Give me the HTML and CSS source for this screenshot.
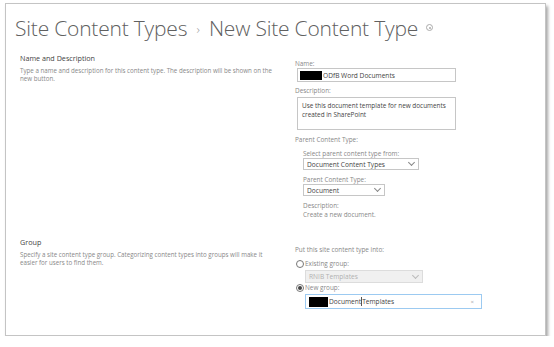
FILE: index.html
```html
<!DOCTYPE html>
<html lang="en">
<head>
    <meta charset="UTF-8">
    <title>New Site Content Type</title>
    <link rel="stylesheet" href="styles.css">
</head>
<body>
    <div class="window">
        <h1 class="title">
            Site Content Types <span class="crumb">&rsaquo;</span> New Site Content Type
            <span class="info"></span>
        </h1>

        <div class="section first">
            <div class="intro">
                <h2>Name and Description</h2>
                <p>Type a name and description for this content type. The description will be shown on the new button.</p>
            </div>
            <div class="fields">
                <div class="label">Name:</div>
                <div class="input name"><span class="redact"></span>ODfB Word Documents</div>
                <div class="label">Description:</div>
                <div class="input area">Use this document template for new documents created in SharePoint</div>
                <div class="label">Parent Content Type:</div>
                <div class="sub">
                    <div class="label">Select parent content type from:</div>
                    <div class="select wide">Document Content Types<span class="chev"></span></div>
                    <div class="label">Parent Content Type:</div>
                    <div class="select short">Document<span class="chev"></span></div>
                    <div class="label">Description:</div>
                    <div class="note">Create a new document.</div>
                </div>
            </div>
        </div>

        <div class="section second">
            <div class="intro">
                <h2>Group</h2>
                <p>Specify a site content type group. Categorizing content types into groups will make it easier for users to find them.</p>
            </div>
            <div class="fields">
                <div class="label">Put this site content type into:</div>
                <div class="radio"><span class="dot"></span>Existing group:</div>
                <div class="select group disabled">RNIB Templates<span class="chev"></span></div>
                <div class="radio tight"><span class="dot on"></span>New group:</div>
                <div class="input group focus"><span class="redact"></span>Document<span class="caret"></span>Templates<span class="clear">&times;</span></div>
            </div>
        </div>
    </div>
</body>
</html>
```

FILE: styles.css
```css
body {
    margin: 0;
    background: #fff;
    font-family: "Open Sans", "Noto Sans", sans-serif;
}

.window {
    margin: 3px 0 0 5px;
    width: 541px;
    height: 333px;
    border: 1px solid #c4c4c4;
    box-shadow: 2px 3px 3px rgba(0, 0, 0, 0.35);
    box-sizing: border-box;
    background: #fff;
}

.title {
    margin: 0;
    padding: 9px 0 0 9px;
    font-size: 21px;
    font-weight: 300;
    color: #606060;
    letter-spacing: -0.2px;
    line-height: 30px;
    white-space: nowrap;
}

.crumb {
    font-size: 13px;
    color: #999;
    margin: 0 4px;
    vertical-align: 2px;
}

.info {
    display: inline-block;
    position: relative;
    width: 5px;
    height: 5px;
    border: 1px solid #aaa;
    border-radius: 50%;
    vertical-align: 5px;
    margin-left: 3px;
}

.info::after {
    content: "";
    position: absolute;
    left: 1.5px;
    top: 1.5px;
    width: 2px;
    height: 2px;
    border-radius: 50%;
    background: #aaa;
}

.section {
    display: grid;
    grid-template-columns: 260px 1fr;
    column-gap: 15px;
    padding-left: 14px;
}

.first { margin-top: 9px; }
.second { margin-top: 18px; }

.intro h2 {
    margin: 0;
    font-size: 7.2px;
    font-weight: 400;
    line-height: 10px;
    color: #444;
}

.intro p {
    margin: 4px 0 0;
    font-size: 6.2px;
    line-height: 8px;
    color: #888;
}

.first .fields { padding-top: 6px; }
.second .fields { padding-top: 8px; }

.label {
    font-size: 6.4px;
    color: #888;
    line-height: 9px;
}

.input, .select {
    display: flex;
    align-items: center;
    box-sizing: border-box;
    border: 1px solid #c6c6c6;
    font-size: 6.6px;
    color: #444;
    background: #fff;
}

.input.name {
    width: 159px;
    height: 14px;
    margin: 0 0 4px 2px;
    padding-left: 2px;
}

.redact {
    display: inline-block;
    width: 22px;
    height: 9px;
    background: #000;
    margin-right: 1px;
}

.input.area {
    display: block;
    width: 159px;
    height: 33px;
    margin: 2px 0 5px 2px;
    padding: 3px 4px;
    font-size: 6.4px;
    line-height: 9px;
}

.sub {
    padding: 5px 0 0 8px;
}

.select {
    justify-content: space-between;
    height: 12px;
    padding: 0 4px 0 3px;
    margin-bottom: 5px;
}

.select.wide { width: 116px; }
.select.short { width: 82px; }

.chev {
    width: 4px;
    height: 4px;
    border-right: 1px solid #888;
    border-bottom: 1px solid #888;
    transform: rotate(45deg);
    margin-top: -3px;
}

.note {
    font-size: 6.4px;
    color: #888;
    line-height: 9px;
}

.radio {
    display: flex;
    align-items: center;
    font-size: 6.4px;
    color: #888;
    margin: 5px 0 0 1px;
    height: 9px;
}

.radio.tight { margin-top: 0; }

.dot {
    width: 6px;
    height: 6px;
    border: 1px solid #777;
    border-radius: 50%;
    margin-right: 1px;
    position: relative;
}

.dot.on::after {
    content: "";
    position: absolute;
    left: 1px;
    top: 1px;
    width: 4px;
    height: 4px;
    border-radius: 50%;
    background: #444;
}

.select.group {
    width: 118px;
    height: 13px;
    margin: 2px 0 0 10px;
}

.disabled {
    background: #f0f0f0;
    border-color: #dcdcdc;
    color: #b0b0b0;
}

.disabled .chev { border-color: #bbb; }

.input.group {
    width: 177px;
    height: 15px;
    margin: 2px 0 0 10px;
    padding-left: 3px;
    position: relative;
}

.focus { border-color: #9ccaf1; }

.input.group .redact {
    width: 19px;
    height: 10px;
}

.caret {
    display: inline-block;
    width: 1px;
    height: 9px;
    background: #555;
}

.clear {
    position: absolute;
    right: 7px;
    color: #aaa;
    font-size: 6px;
}
```
